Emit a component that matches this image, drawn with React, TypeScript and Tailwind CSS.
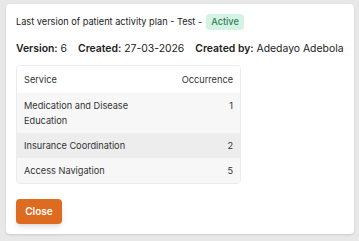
import React from 'react';

const rows = [
  { service: 'Medication and Disease Education', count: 1 },
  { service: 'Insurance Coordination', count: 2 },
  { service: 'Access Navigation', count: 5 },
];

export default function App() {
  return (
    <div className="w-[359px] h-[241px] bg-[#e8e8e8] pt-[4px] pb-[7px] pl-[6px] pr-[5px] font-['Inter',sans-serif]">
      <div className="h-full rounded bg-white px-[10px] pt-[10px] shadow-sm">
        <div className="flex h-[16px] items-center gap-[4px] whitespace-nowrap text-[9.2px] text-[#222]">
          <span>Last version of patient activity plan - Test -</span>
          <span className="rounded bg-[#d5f3e3] px-[5px] leading-[16px] font-medium text-[#2f7d57]">Active</span>
        </div>

        <div className="mt-[11px] flex gap-[11px] whitespace-nowrap text-[10.4px] leading-[16px] text-[#222]">
          <span><b className="font-semibold">Version:</b> 6</span>
          <span><b className="font-semibold">Created:</b> 27-03-2026</span>
          <span><b className="font-semibold">Created by:</b> Adedayo Adebola</span>
        </div>

        <div className="mt-[8px] w-[225px] overflow-hidden rounded border border-[#ececec] text-[9.2px] text-[#333]">
          <div className="flex h-[27px] items-center justify-between bg-white px-[7px]">
            <span>Service</span>
            <span>Occurrence</span>
          </div>
          {rows.map((r, i) => (
            <div
              key={r.service}
              className={`flex justify-between gap-4 px-[7px] py-[5px] leading-[15px] ${i === 1 ? 'bg-[#ededed]' : 'bg-[#f7f7f7]'}`}
            >
              <span className="w-[110px]">{r.service}</span>
              <span>{r.count}</span>
            </div>
          ))}
        </div>

        <button className="mt-[15px] h-[25px] w-[46px] rounded bg-[#dd6b20] text-[10px] font-semibold text-white shadow-md">
          Close
        </button>
      </div>
    </div>
  );
}
